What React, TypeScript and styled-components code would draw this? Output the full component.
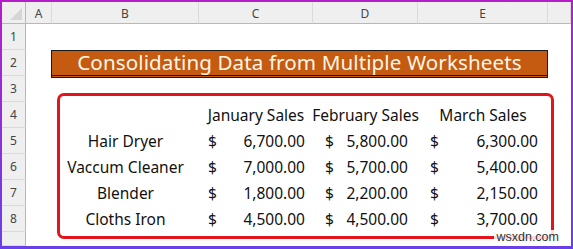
import React from "react";
import styled, { createGlobalStyle } from "styled-components";

const Global = createGlobalStyle`
  html, body { margin: 0; padding: 0; background: #fff; overflow: hidden; }
  * { box-sizing: border-box; }
`;

const Frame = styled.div`
  width: 573px;
  height: 249px;
  padding: 2px 2px 3px 2px;
  background: linear-gradient(180deg, #b41ec9 0%, #8f2fd8 50%, #6a40e8 100%);
`;

const Sheet = styled.div`
  position: relative;
  width: 100%;
  height: 100%;
  background: #fff;
  display: grid;
  grid-template-columns: 24px 26px 147px 114px 105px 130px 1fr;
  grid-template-rows: 22px repeat(8, 26px) 1fr;
  overflow: hidden;
`;

const Corner = styled.div`
  background: #efefef;
  border-right: 1px solid #b8b8b8;
  border-bottom: 1px solid #b8b8b8;
  position: relative;
  &::after {
    content: "";
    position: absolute;
    right: 3px;
    bottom: 3px;
    width: 0;
    height: 0;
    border-left: 12px solid transparent;
    border-bottom: 12px solid #d6d6d6;
  }
`;

const ColHead = styled.div`
  background: #efefef;
  border-bottom: 1px solid #b8b8b8;
  border-right: 1px solid #dadada;
  display: flex;
  align-items: center;
  justify-content: center;
  font-family: "Noto Sans", "Liberation Sans", sans-serif;
  font-size: 12px;
  color: #444;
  padding-top: 1px;
`;

const RowHead = styled.div`
  background: #efefef;
  border-right: 1px solid #b8b8b8;
  border-bottom: 1px solid #dadada;
  display: flex;
  align-items: center;
  justify-content: center;
  font-family: "Noto Sans", "Liberation Sans", sans-serif;
  font-size: 12px;
  color: #444;
`;

const Cell = styled.div<{ $align?: "left" | "center" | "right" }>`
  display: flex;
  align-items: center;
  justify-content: ${(p) =>
    p.$align === "left" ? "flex-start" : p.$align === "right" ? "flex-end" : "center"};
  font-family: "Noto Sans", "Liberation Sans", sans-serif;
  font-size: 15.5px;
  color: #111;
  white-space: nowrap;
  overflow: visible;
`;

const Money = styled.div<{ $dl: number; $nr: number }>`
  display: flex;
  align-items: center;
  justify-content: space-between;
  padding-left: ${(p) => p.$dl}px;
  padding-right: ${(p) => p.$nr}px;
  font-family: "Noto Sans", "Liberation Sans", sans-serif;
  font-size: 15.5px;
  color: #111;
  white-space: nowrap;
`;

const Title = styled.div`
  grid-column: 3 / 7;
  grid-row: 3;
  margin-left: -1px;
  background: #c55a11;
  border: 1px solid #1a1a1a;
  border-bottom: 3px double #1a1a1a;
  height: 28px;
  display: flex;
  align-items: center;
  justify-content: center;
  font-family: "Noto Sans", "Liberation Sans", sans-serif;
  font-size: 20.6px;
  color: #fff6e6;
  letter-spacing: 0.1px;
  white-space: nowrap;
  padding-bottom: 3px;
`;

const Highlight = styled.div`
  position: absolute;
  left: 55px;
  top: 91px;
  width: 497px;
  height: 146px;
  border: 3px solid #e0161c;
  border-radius: 7px;
  pointer-events: none;
`;

const Watermark = styled.div`
  position: absolute;
  right: 10px;
  bottom: 2px;
  font-family: "Liberation Sans", Arial, sans-serif;
  font-size: 12.5px;
  color: #333;
  background: rgba(255, 255, 255, 0.85);
  padding: 0 2px;
`;

const letters = ["A", "B", "C", "D", "E", ""];

const rows = [
  { name: "Hair Dryer", v: ["6,700.00", "5,800.00", "6,300.00"] },
  { name: "Vaccum Cleaner", v: ["7,000.00", "5,700.00", "5,400.00"] },
  { name: "Blender", v: ["1,800.00", "2,200.00", "2,150.00"] },
  { name: "Cloths Iron", v: ["4,500.00", "4,500.00", "3,700.00"] },
];

const moneyPad: [number, number][] = [
  [9, 8],
  [12, 10],
  [12, 10],
];

export default function App() {
  return (
    <>
      <Global />
      <Frame>
        <Sheet>
          <Corner />
          {letters.map((l, i) => (
            <ColHead key={"c" + i}>{l}</ColHead>
          ))}

          <RowHead>1</RowHead>
          <Cell style={{ gridColumn: "2 / 8" }} />

          <RowHead>2</RowHead>
          <Cell />
          <Title>Consolidating Data from Multiple Worksheets</Title>
          <Cell />

          <RowHead>3</RowHead>
          <Cell style={{ gridColumn: "2 / 8" }} />

          <RowHead>4</RowHead>
          <Cell />
          <Cell />
          <Cell>January Sales</Cell>
          <Cell>February Sales</Cell>
          <Cell>March Sales</Cell>
          <Cell />

          {rows.map((r, i) => (
            <React.Fragment key={r.name}>
              <RowHead>{5 + i}</RowHead>
              <Cell />
              <Cell>{r.name}</Cell>
              {r.v.map((val, j) => (
                <Money key={j} $dl={moneyPad[j][0]} $nr={moneyPad[j][1]}>
                  <span>$</span>
                  <span>{val}</span>
                </Money>
              ))}
              <Cell />
            </React.Fragment>
          ))}

          <RowHead />
          <Cell style={{ gridColumn: "2 / 8" }} />

          <Highlight />
          <Watermark>wsxdn.com</Watermark>
        </Sheet>
      </Frame>
    </>
  );
}
